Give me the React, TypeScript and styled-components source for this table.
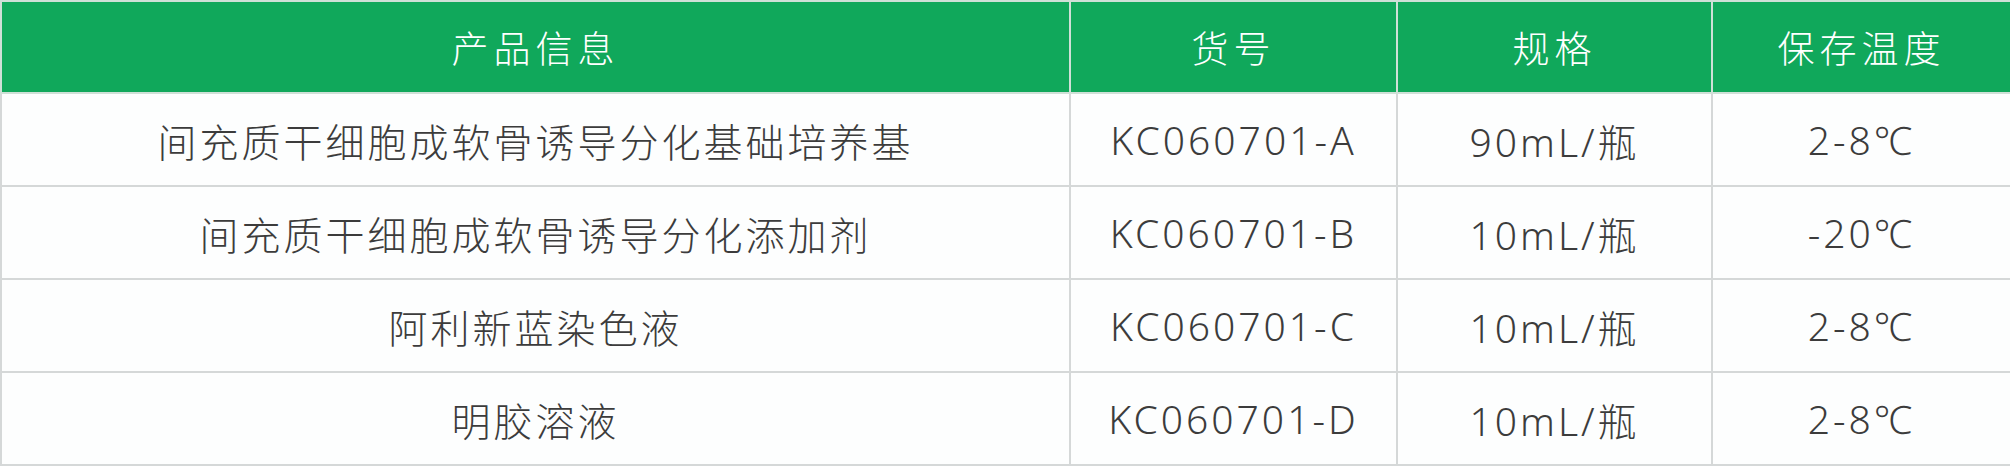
import React from "react";
import styled, { createGlobalStyle } from "styled-components";

type Product = {
  name: string;
  code: string;
  spec: string;
  temp: string;
};

const products: Product[] = [
  { name: "间充质干细胞成软骨诱导分化基础培养基", code: "KC060701-A", spec: "90mL/瓶", temp: "2-8℃" },
  { name: "间充质干细胞成软骨诱导分化添加剂", code: "KC060701-B", spec: "10mL/瓶", temp: "-20℃" },
  { name: "阿利新蓝染色液", code: "KC060701-C", spec: "10mL/瓶", temp: "2-8℃" },
  { name: "明胶溶液", code: "KC060701-D", spec: "10mL/瓶", temp: "2-8℃" },
];

const columns = [
  { title: "产品信息", width: 1069 },
  { title: "货号", width: 327 },
  { title: "规格", width: 315 },
  { title: "保存温度", width: 299 },
];

const GlobalStyle = createGlobalStyle`
  html, body {
    margin: 0;
    padding: 0;
    background: #ffffff;
  }
  body {
    font-family: "Noto Sans", "Noto Sans CJK SC", sans-serif;
  }
`;

const Table = styled.table`
  width: 2010px;
  table-layout: fixed;
  border-collapse: collapse;
  background: #fdfefe;
`;

const HeadCell = styled.th`
  height: 90px;
  padding: 0;
  background: #10a85b;
  color: #ffffff;
  font-size: 37px;
  font-weight: 300;
  letter-spacing: 5px;
  text-align: center;
  vertical-align: middle;
  border: 2px solid #cfe0d7;
`;

const Cell = styled.td`
  height: 91px;
  padding: 0;
  color: #3c3c3c;
  font-size: 39px;
  font-weight: 300;
  letter-spacing: 3px;
  text-align: center;
  vertical-align: middle;
  border: 2px solid #d5d8d8;
`;

export default function App() {
  return (
    <>
      <GlobalStyle />
      <Table>
        <colgroup>
          {columns.map((c) => (
            <col key={c.title} style={{ width: c.width }} />
          ))}
        </colgroup>
        <thead>
          <tr>
            {columns.map((c) => (
              <HeadCell key={c.title}>{c.title}</HeadCell>
            ))}
          </tr>
        </thead>
        <tbody>
          {products.map((p) => (
            <tr key={p.code}>
              <Cell>{p.name}</Cell>
              <Cell>{p.code}</Cell>
              <Cell>{p.spec}</Cell>
              <Cell>{p.temp}</Cell>
            </tr>
          ))}
        </tbody>
      </Table>
    </>
  );
}
